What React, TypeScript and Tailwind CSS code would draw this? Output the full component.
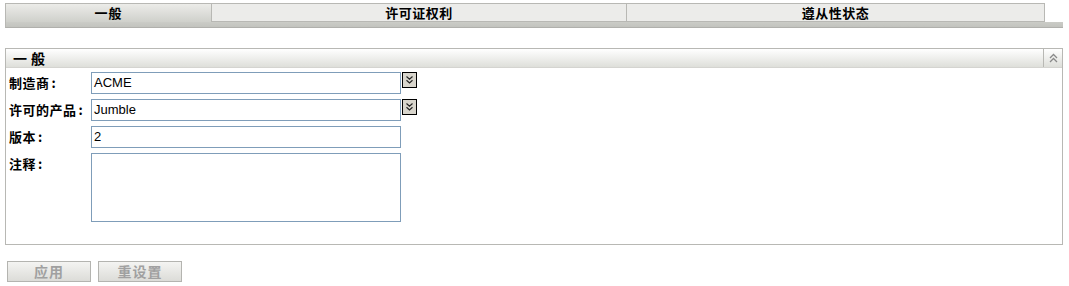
import React from "react";

const cjk = { fontFamily: '"Noto Sans CJK SC", "Liberation Sans", sans-serif' };
const lat = { fontFamily: '"Liberation Sans", Arial, sans-serif' };

function DownBtn() {
  return (
    <div className="w-[15px] h-[16px] border border-black bg-[#d8d5cc] flex items-center justify-center ml-px self-start">
      <svg width="9" height="10" viewBox="0 0 9 10">
        <path d="M1.5 1.5 L4.5 4.2 L7.5 1.5 M1.5 5.3 L4.5 8 L7.5 5.3" stroke="#222" strokeWidth="1.2" fill="none" />
      </svg>
    </div>
  );
}

function Row({ label, children, className = "" }: { label: string; children: React.ReactNode; className?: string }) {
  return (
    <div className={"flex " + className}>
      <div className="w-[85px] pl-[3px] pt-[2px] text-[13px] tracking-[0.5px] font-bold text-black leading-[18px] whitespace-nowrap" style={cjk}>
        {label}
        <span className="ml-[2px]">:</span>
      </div>
      {children}
    </div>
  );
}

export default function App() {
  return (
    <div className="w-[1069px] h-[286px] bg-white relative" style={cjk}>
      {/* tabs */}
      <div className="pt-[3px] pl-[5px] w-[1063px]">
        <div className="flex h-[19px]">
          <div className="w-[206px] h-[19px] border-t border-l border-[#b8b8b4] bg-gradient-to-b from-[#ecece9] to-[#cfd0cb] flex items-center justify-center text-[13px] tracking-[1px] font-bold text-black">
            一般
          </div>
          <div className="w-[416px] h-[19px] border border-[#b8b8b4] bg-[#ececea] flex items-center justify-center text-[13px] tracking-[0.5px] font-bold text-black">
            许可证权利
          </div>
          <div className="w-[418px] h-[19px] border border-l-0 border-[#b8b8b4] bg-[#ececea] flex items-center justify-center text-[13px] tracking-[0.5px] font-bold text-black">
            遵从性状态
          </div>
        </div>
        <div className="h-[6px] w-[1058px] bg-gradient-to-b from-[#cbccc7] to-[#c2c3be] border-b border-[#b0b0ac] border-l border-l-[#b8b8b4]"></div>
      </div>

      {/* panel */}
      <div className="ml-[5px] mt-[20px] w-[1058px] h-[197px] border border-[#b8b8b4] flex flex-col">
        <div className="h-[19px] flex bg-gradient-to-b from-[#ffffff] to-[#dedfda] border-b border-[#d4d4d0]">
          <div className="flex-1 pl-[7px] text-[14px] tracking-[4px] font-bold text-black leading-[18px]">一般</div>
          <div className="w-[19px] border-l border-[#b8b8b4] flex items-center justify-center">
            <svg width="11" height="11" viewBox="0 0 11 11">
              <path d="M2 5 L5.5 1.5 L9 5 M2 9 L5.5 5.5 L9 9" stroke="#8a8a8a" strokeWidth="1.3" fill="none" />
            </svg>
          </div>
        </div>
        <div className="pt-[4px]">
          <Row label="制造商">
            <div className="w-[310px] h-[22px] border border-[#7f9db9] text-[13px] leading-[20px] pl-[2px] text-black" style={lat}>ACME</div>
            <DownBtn />
          </Row>
          <Row label="许可的产品" className="mt-[5px]">
            <div className="w-[310px] h-[22px] border border-[#7f9db9] text-[13px] leading-[20px] pl-[2px] text-black" style={lat}>Jumble</div>
            <DownBtn />
          </Row>
          <Row label="版本" className="mt-[5px]">
            <div className="w-[310px] h-[22px] border border-[#7f9db9] text-[13px] leading-[20px] pl-[2px] text-black" style={lat}>2</div>
          </Row>
          <Row label="注释" className="mt-[5px]">
            <div className="w-[310px] h-[69px] border border-[#7f9db9]"></div>
          </Row>
        </div>
      </div>

      {/* buttons */}
      <div className="flex gap-[7px] ml-[7px] mt-[16px]">
        <div className="w-[84px] h-[21px] border border-[#b4b4b0] bg-gradient-to-b from-[#f4f4f2] to-[#dcdcd8] flex items-center justify-center text-[14px] tracking-[1px] font-bold text-[#a0a0a0]">
          应用
        </div>
        <div className="w-[84px] h-[21px] border border-[#b4b4b0] bg-gradient-to-b from-[#f4f4f2] to-[#dcdcd8] flex items-center justify-center text-[14px] tracking-[1px] font-bold text-[#a0a0a0]">
          重设置
        </div>
      </div>
    </div>
  );
}
